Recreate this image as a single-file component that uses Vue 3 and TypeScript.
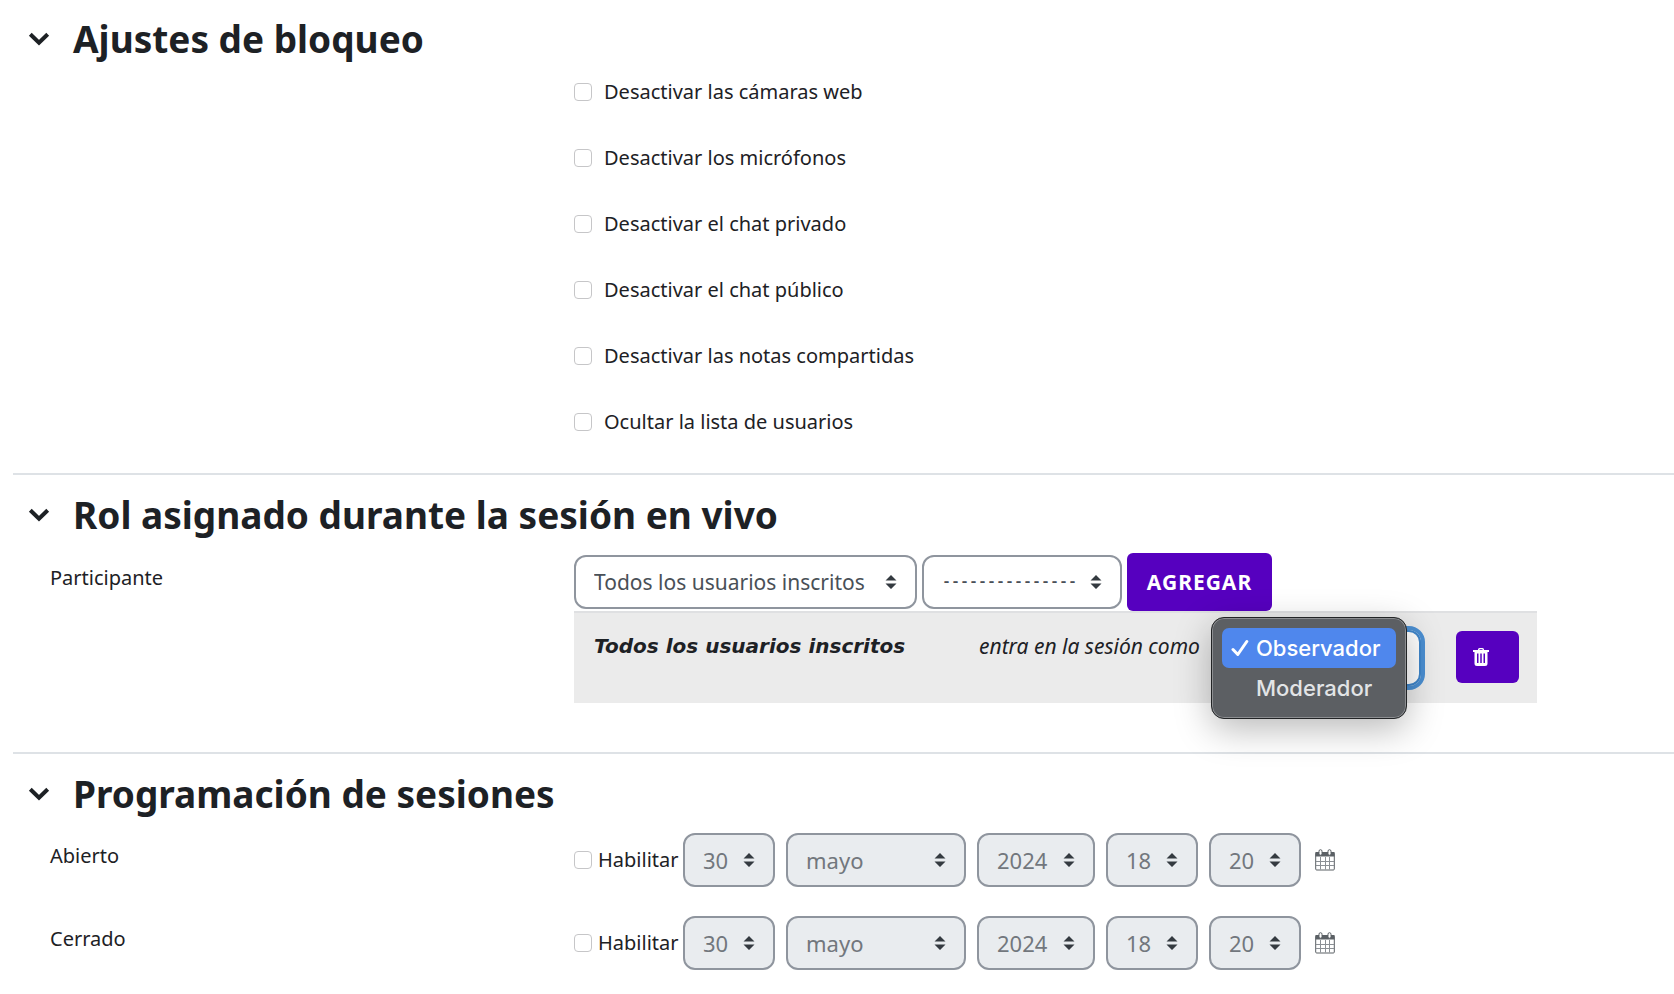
<script setup lang="ts">
import { ref, reactive } from 'vue'

interface LockOption {
  id: string
  label: string
  checked: boolean
}

interface DateField {
  name: string
  options: string[]
  value: string
}

interface Schedule {
  id: string
  label: string
  enabled: boolean
  fields: DateField[]
}

const locks = reactive<LockOption[]>([
  { id: 'cam', label: 'Desactivar las cámaras web', checked: false },
  { id: 'mic', label: 'Desactivar los micrófonos', checked: false },
  { id: 'private', label: 'Desactivar el chat privado', checked: false },
  { id: 'public', label: 'Desactivar el chat público', checked: false },
  { id: 'notes', label: 'Desactivar las notas compartidas', checked: false },
  { id: 'users', label: 'Ocultar la lista de usuarios', checked: false },
])

const makeFields = (): DateField[] => [
  { name: 'day', options: ['30'], value: '30' },
  { name: 'month', options: ['mayo'], value: 'mayo' },
  { name: 'year', options: ['2024'], value: '2024' },
  { name: 'hour', options: ['18'], value: '18' },
  { name: 'minute', options: ['20'], value: '20' },
]

const schedules = reactive<Schedule[]>([
  { id: 'open', label: 'Abierto', enabled: false, fields: makeFields() },
  { id: 'close', label: 'Cerrado', enabled: false, fields: makeFields() },
])

const roles = ['Observador', 'Moderador']
const role = ref('Observador')
const open = reactive({ locks: true, roles: true, schedule: true })
</script>

<template>
  <form class="settings" @submit.prevent>
    <section class="group">
      <h2 class="title">
        <button type="button" class="toggle" aria-label="Ajustes de bloqueo" :aria-expanded="open.locks" @click="open.locks = !open.locks">
          <svg class="chevron" viewBox="0 0 22 14"><path d="M2.3 2.3 11 10.8 19.7 2.3" /></svg>
        </button>
        Ajustes de bloqueo
      </h2>
      <div v-show="open.locks" class="locks">
        <label v-for="lock in locks" :key="lock.id" class="lock">
          <input v-model="lock.checked" type="checkbox" class="check" />
          {{ lock.label }}
        </label>
      </div>
    </section>

    <section class="group">
      <h2 class="title">
        <button type="button" class="toggle" aria-label="Rol asignado" :aria-expanded="open.roles" @click="open.roles = !open.roles">
          <svg class="chevron" viewBox="0 0 22 14"><path d="M2.3 2.3 11 10.8 19.7 2.3" /></svg>
        </button>
        Rol asignado durante la sesión en vivo
      </h2>
      <div v-show="open.roles" class="row participants">
        <label class="label" for="participant">Participante</label>
        <div class="control">
          <div class="adder">
            <span class="picker audience">
              <select id="participant"><option>Todos los usuarios inscritos</option></select>
              <svg class="arrows" viewBox="0 0 12 14"><path d="M6 0 11.5 5.5H.5zM6 14 .5 8.5h11z" /></svg>
            </span>
            <span class="picker member">
              <select aria-label="Usuario"><option>---------------</option></select>
              <svg class="arrows" viewBox="0 0 12 14"><path d="M6 0 11.5 5.5H.5zM6 14 .5 8.5h11z" /></svg>
            </span>
            <button type="button" class="add">AGREGAR</button>
          </div>
          <table class="rules">
            <tbody>
              <tr>
                <td class="who">Todos los usuarios inscritos</td>
                <td class="joins">
                  <div class="joins-line">
                    <label for="role">entra en la sesión como</label>
                    <span class="role">
                      <select id="role" v-model="role">
                        <option v-for="item in roles" :key="item">{{ item }}</option>
                      </select>
                      <ul class="menu" role="listbox" aria-label="Rol">
                        <li v-for="item in roles" :key="item" role="option" :aria-selected="item === role" class="choice" :class="{ chosen: item === role }" @click="role = item">
                          <svg class="tick" viewBox="0 0 18 18"><path d="M2 10.5 6.8 15.5 15.8 2.5" /></svg>
                          {{ item }}
                        </li>
                      </ul>
                    </span>
                  </div>
                </td>
                <td class="action">
                  <button type="button" class="remove" aria-label="Eliminar">
                    <svg viewBox="0 0 16 18">
                      <path fill-rule="evenodd" d="M5 2V1.5Q5 0 6.5 0h3Q11 0 11 1.500V2h5v2h-1.500v11.500Q14.500 18 12 18H4Q1.500 18 1.500 15.500V4H0V2zM6.500 1.200V2h3v-.8zM4 5.500v9.500h1.500V5.500zM7.250 5.500v9.500h1.500V5.500zM10.500 5.500v9.500H12V5.500z" />
                    </svg>
                  </button>
                </td>
              </tr>
            </tbody>
          </table>
        </div>
      </div>
    </section>

    <section class="group">
      <h2 class="title">
        <button type="button" class="toggle" aria-label="Programación" :aria-expanded="open.schedule" @click="open.schedule = !open.schedule">
          <svg class="chevron" viewBox="0 0 22 14"><path d="M2.3 2.3 11 10.8 19.7 2.3" /></svg>
        </button>
        Programación de sesiones
      </h2>
      <div v-show="open.schedule" class="schedules">
        <div v-for="item in schedules" :key="item.id" class="row">
          <span class="label">{{ item.label }}</span>
          <div class="dates">
            <label class="enable">
              <input v-model="item.enabled" type="checkbox" class="check" />
              Habilitar
            </label>
            <span v-for="field in item.fields" :key="field.name" class="picker" :class="field.name">
              <select v-model="field.value" :disabled="!item.enabled" :aria-label="item.label + ' ' + field.name">
                <option v-for="value in field.options" :key="value">{{ value }}</option>
              </select>
              <svg class="arrows" viewBox="0 0 12 14"><path d="M6 0 11.5 5.5H.5zM6 14 .5 8.5h11z" /></svg>
            </span>
            <button type="button" class="calendar" aria-label="Calendario">
              <svg viewBox="0 0 20 22">
                <rect class="frame" x=".7" y="3.500" width="18.600" height="17.500" rx="1" />
                <path class="grid" d="M1 12.500h18M1 16.500h18M5.500 8v12.500M10.500 8v12.500M14.500 8v12.500" />
                <path class="band" d="M.5 3h19v4.500H.5z" />
                <rect class="ring" x="4" y=".7" width="3" height="5.500" rx="1.500" />
                <rect class="ring" x="13" y=".7" width="3" height="5.500" rx="1.500" />
              </svg>
            </button>
          </div>
        </div>
      </div>
    </section>
  </form>
</template>

<style>
body {
  margin: 0;
  background: #fff;
}
</style>

<style scoped>
.settings {
  padding-left: 13px;
  color: #1d2125;
  font: 20px/30px "Noto Sans", "Open Sans", sans-serif;
  overflow-x: clip;
}

*,
*::before {
  box-sizing: border-box;
}

button,
select {
  margin: 0;
  font: inherit;
}

.group + .group {
  border-top: 2px solid #dee2e6;
}

.title {
  display: flex;
  align-items: center;
  margin: 0;
  padding: 15px 0 0 15px;
  font-size: 37px;
  line-height: 48px;
  font-weight: 700;
}

.group + .group .title {
  padding-top: 16px;
}

.toggle {
  display: flex;
  width: 45px;
  padding: 0;
  border: 0;
  background: none;
}

.chevron {
  width: 22px;
  height: 14px;
  fill: none;
  stroke: #1d2125;
  stroke-width: 4;
}

.locks {
  display: grid;
  gap: 36px;
  padding: 14px 0 36px 561px;
}

.lock {
  display: flex;
  align-items: center;
  gap: 12px;
}

.check {
  appearance: none;
  flex: none;
  width: 18px;
  height: 18px;
  margin: 0;
  border: 1px solid #c6c6c8;
  border-radius: 4px;
  background: #fff;
}

.check:checked {
  background: #5600bf;
}

.row {
  display: grid;
  grid-template-columns: 524px 1fr;
  padding-left: 37px;
}

.participants {
  padding-top: 14px;
  padding-bottom: 49px;
}

.adder {
  display: flex;
  align-items: center;
  gap: 5px;
}

.picker {
  position: relative;
  display: flex;
}

.picker select {
  appearance: none;
  width: 100%;
  height: 54px;
  padding: 0 18px;
  border: 2px solid #8f959e;
  border-radius: 12px;
  background: #fff;
  color: #495057;
  font-size: 22px;
}

.picker select:disabled {
  background: #e9ecef;
  color: #72777d;
  opacity: 1;
}

.arrows {
  position: absolute;
  right: 20px;
  top: 20px;
  width: 12px;
  height: 14px;
  fill: #343a40;
  pointer-events: none;
}

.audience {
  width: 343px;
}

.audience select {
  font-size: 21px;
}

.member {
  width: 200px;
}

.member select {
  font: 700 15px "Liberation Mono", monospace;
}

.add,
.remove {
  border: 0;
  border-radius: 6px;
  background: #5600bf;
  color: #fff;
}

.add {
  width: 145px;
  height: 58px;
  padding: 0;
  font-size: 21px;
  font-weight: 700;
  letter-spacing: 1px;
}

.rules {
  width: 87.5%;
  border-collapse: collapse;
  background: #ebebeb;
  border-top: 2px solid #dfe0e2;
  table-layout: fixed;
}

.rules td {
  height: 91px;
  padding: 0;
  vertical-align: top;
}

.rules .who {
  width: 405px;
  padding: 18px 0 0 20px;
  font-family: "DejaVu Sans", sans-serif;
  font-size: 20px;
  font-weight: 700;
  font-style: italic;
}

.joins-line {
  display: flex;
  align-items: flex-start;
  gap: 18px;
  padding-top: 13px;
  white-space: nowrap;
}

.joins-line > label {
  width: 224px;
  padding-top: 5px;
  font-size: 21px;
  font-style: italic;
}

.role {
  position: relative;
  display: flex;
}

.role > select {
  appearance: none;
  width: 200px;
  height: 56px;
  margin-top: 4px;
  padding: 0 20px;
  border: 2px solid #3f86cb;
  border-radius: 12px;
  background: #fff;
  color: #495057;
  outline: 4px solid #4b8fd2;
}

.menu {
  position: absolute;
  left: -10px;
  top: -9px;
  z-index: 2;
  width: 196px;
  height: 102px;
  margin: 0;
  padding: 10px;
  border: 1px solid #222426;
  border-radius: 13px;
  background: #5c5f63;
  box-shadow: inset 0 0 0 1px #8c8e91, 0 10px 36px rgb(0 0 0 / 28%);
  color: #e2e4e6;
  font: 500 22px/40px Inter, sans-serif;
  list-style: none;
}

.choice {
  display: flex;
  align-items: center;
  gap: 7px;
  padding-left: 9px;
  border-radius: 7px;
}

.chosen {
  background: #4f87ed;
  color: #fff;
}

.tick {
  width: 18px;
  height: 18px;
  fill: none;
  stroke: none;
}

.chosen .tick {
  stroke: #fff;
  stroke-width: 3;
  stroke-linecap: round;
  stroke-linejoin: round;
}

.rules .action {
  width: 81px;
  padding-top: 18px;
}

.remove {
  display: flex;
  align-items: center;
  width: 63px;
  height: 52px;
  padding: 0 17px;
}

.remove svg {
  width: 16px;
  height: 18px;
  fill: #fff;
}

.schedules {
  display: grid;
  gap: 29px;
  padding-top: 15px;
}

.schedules .label {
  padding-top: 8px;
}

.participants .label {
  padding-top: 10px;
}

.dates {
  display: flex;
  align-items: center;
  gap: 11px;
}

.enable {
  display: flex;
  align-items: center;
  gap: 6px;
  width: 98px;
}

.day,
.hour,
.minute {
  width: 92px;
}

.month {
  width: 180px;
}

.year {
  width: 118px;
}

.calendar {
  display: flex;
  margin-left: 3px;
  padding: 0;
  border: 0;
  background: none;
}

.calendar svg {
  width: 20px;
  height: 22px;
}

.frame,
.ring {
  fill: #fff;
  stroke: #5b6065;
  stroke-width: 1;
}

.grid {
  fill: none;
  stroke: #8b9095;
  stroke-width: 1;
}

.band {
  fill: #5b6065;
}
</style>
